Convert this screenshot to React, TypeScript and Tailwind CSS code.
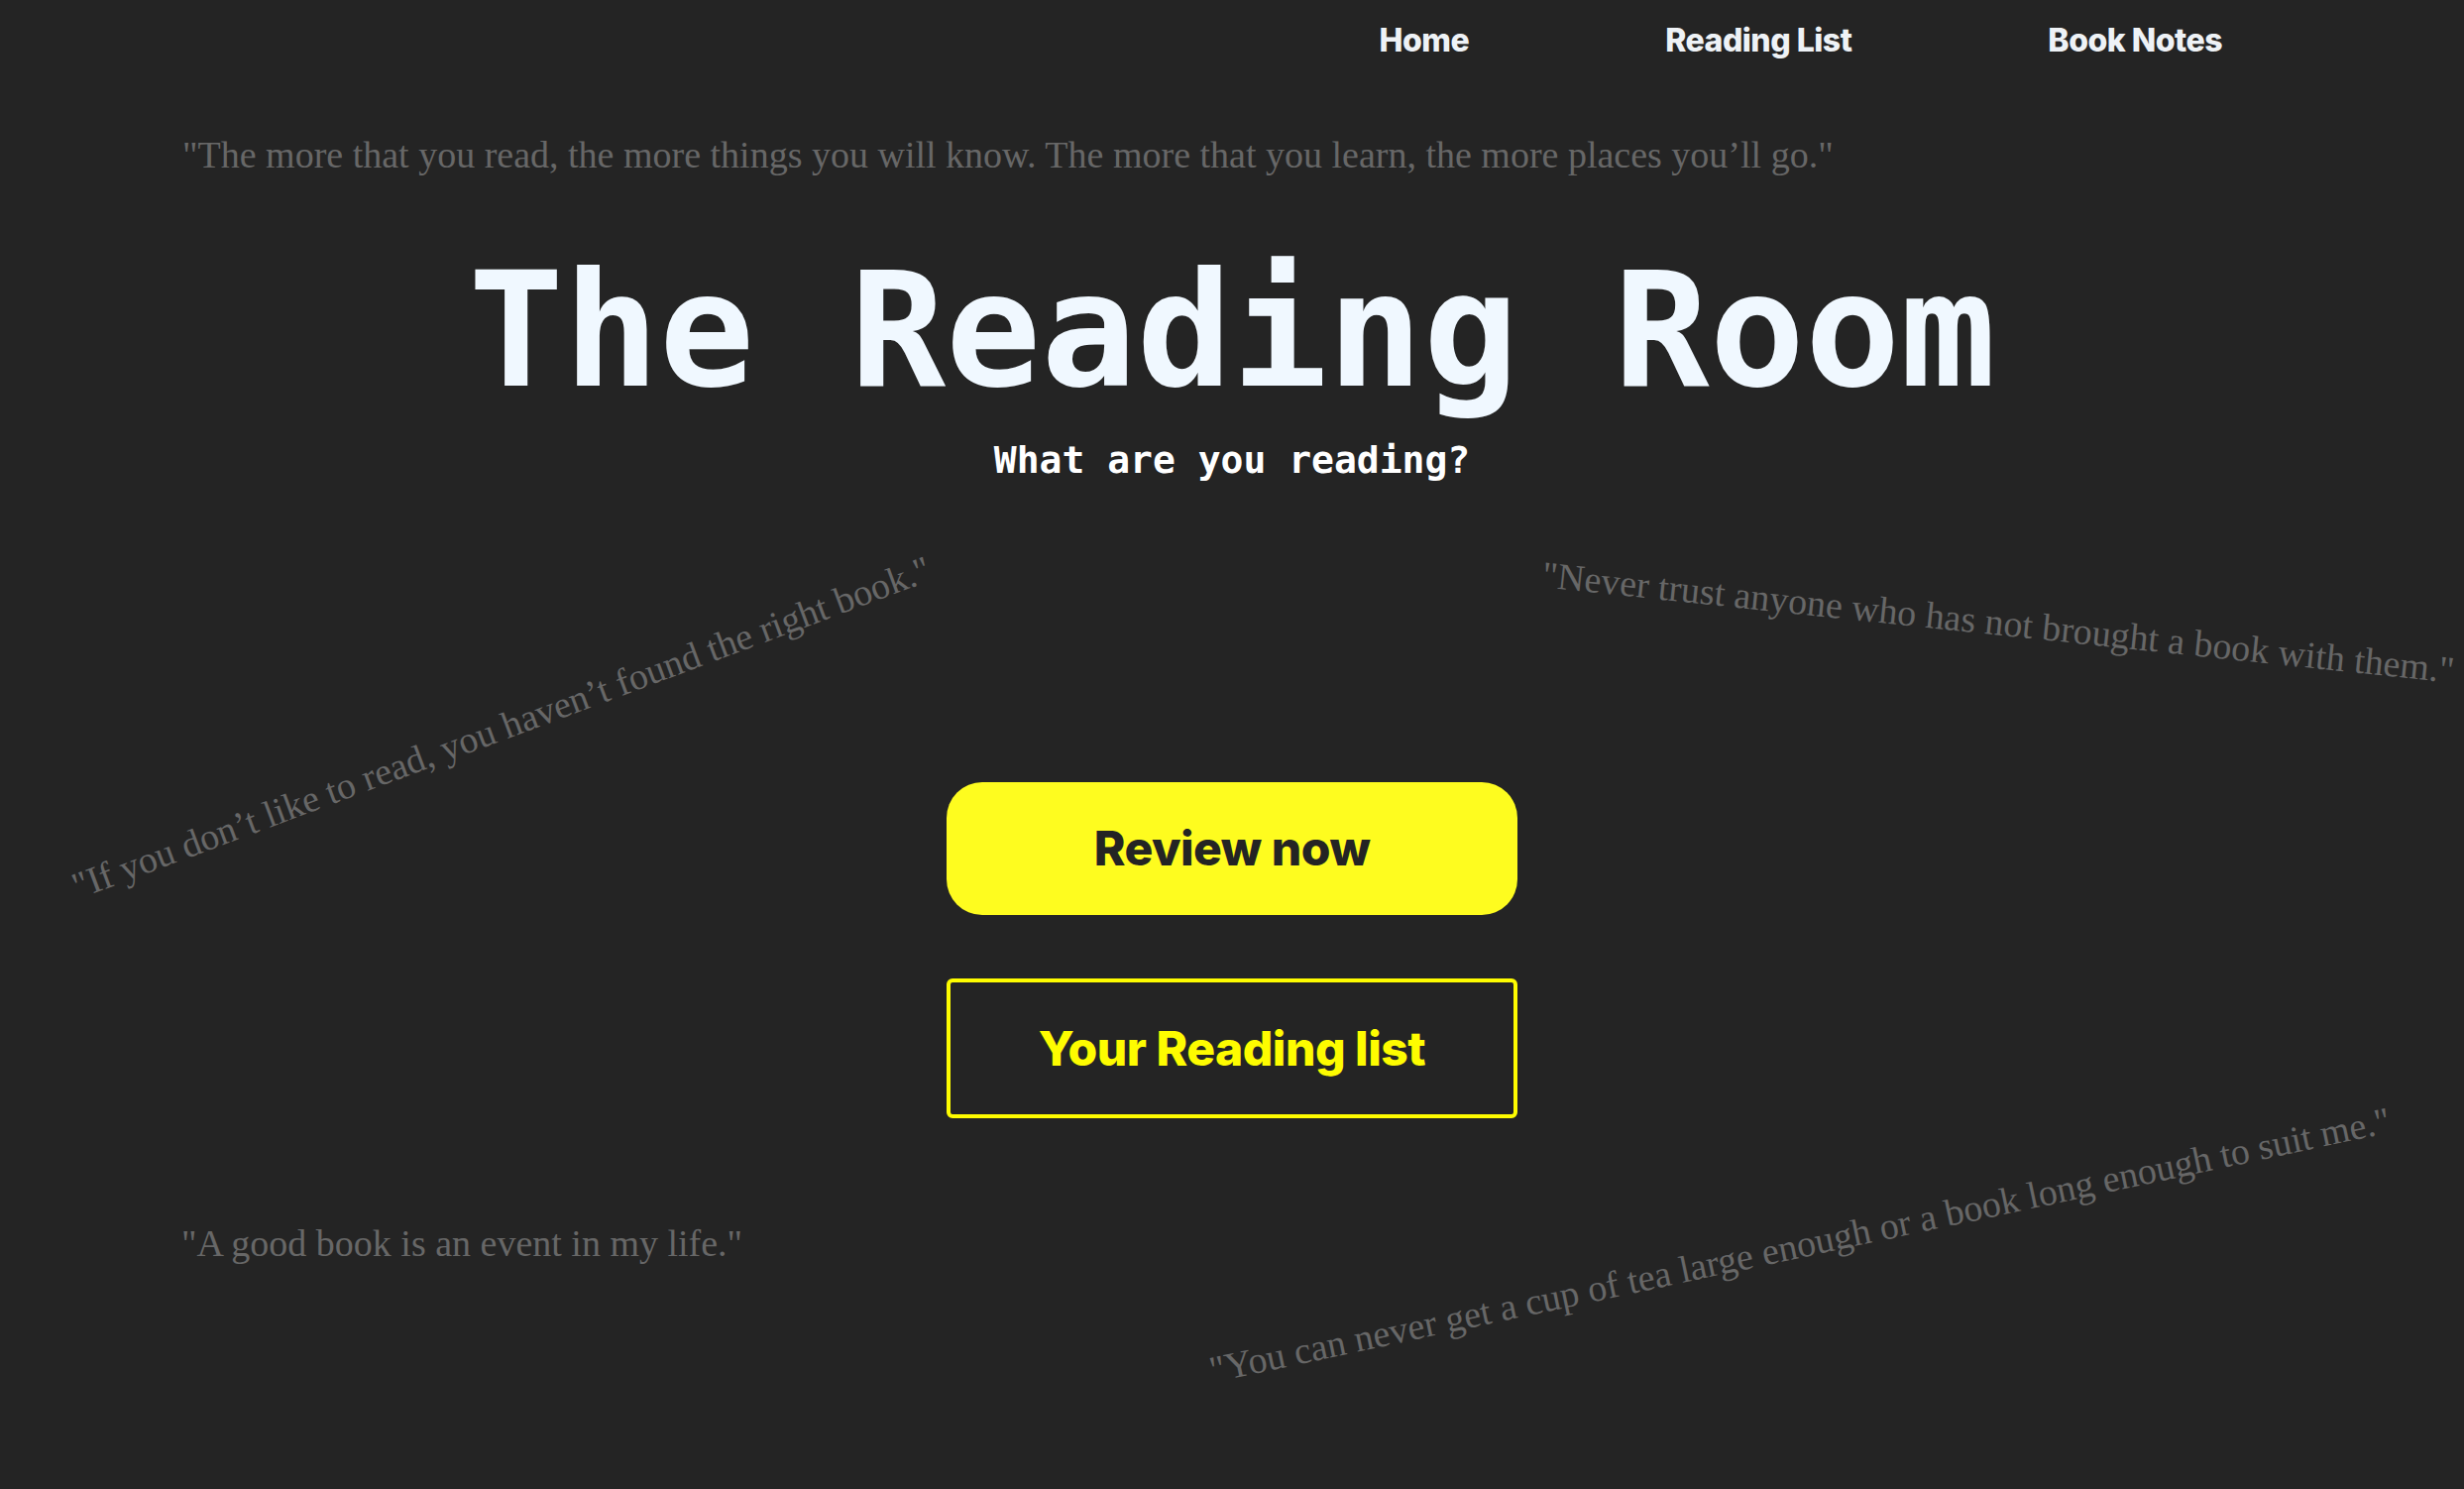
import React from "react";

const quote =
  "absolute whitespace-nowrap font-['Liberation_Serif','Times_New_Roman',serif] text-[38px] text-[#676767]";

export default function App() {
  return (
    <div className="relative min-h-[1502px] w-full overflow-hidden bg-[#242424]">
      {/* decorative quotes scattered over the background */}
      <p className={`${quote} left-[184px] top-[128px]`}>
        "The more that you read, the more things you will know. The more that you learn, the more places you’ll go."
      </p>
      <p className={`${quote} left-[506px] top-[734px] -translate-x-1/2 -translate-y-1/2 rotate-[-20.5deg]`}>
        "If you don’t like to read, you haven’t found the right book."
      </p>
      <p className={`${quote} left-[2016px] top-[628px] -translate-x-1/2 -translate-y-1/2 rotate-[6deg]`}>
        "Never trust anyone who has not brought a book with them."
      </p>
      <p className={`${quote} left-[183px] top-[1226px]`}>
        "A good book is an event in my life."
      </p>
      <p className={`${quote} left-[1816px] top-[1256px] -translate-x-1/2 -translate-y-1/2 rotate-[-12deg]`}>
        "You can never get a cup of tea large enough or a book long enough to suit me."
      </p>

      <div className="relative flex flex-col">
        <nav className="flex justify-end gap-[198px] pr-[244px] pt-[21px] font-['Inter','Open_Sans',sans-serif] text-[32px] font-extrabold leading-[40px] tracking-[-0.5px] text-[#eef2f6]">
          <a>Home</a>
          <a>Reading List</a>
          <a>Book Notes</a>
        </nav>

        <div className="flex flex-col items-center">
          <h1 className="mt-[193px] font-['DejaVu_Sans_Mono','Liberation_Mono',monospace] text-[160px] font-bold leading-none text-[#f0f8ff]">
            The Reading Room
          </h1>
          <h2 className="mt-[31px] font-['DejaVu_Sans_Mono','Liberation_Mono',monospace] text-[38px] font-bold leading-none text-white">
            What are you reading?
          </h2>

          <button className="mt-[306px] flex h-[134px] w-[576px] items-center justify-center rounded-[36px] bg-[#fefc1f] font-['Inter','Open_Sans',sans-serif] text-[48px] font-extrabold tracking-[-0.5px] text-[#242424]">
            Review now
          </button>
          <button className="mt-[64px] flex h-[141px] w-[576px] items-center justify-center rounded-[6px] border-[4px] border-[#fefc00] font-['Inter','Open_Sans',sans-serif] text-[48px] font-extrabold tracking-[-0.5px] text-[#fefc00]">
            Your Reading list
          </button>
        </div>
      </div>
    </div>
  );
}
